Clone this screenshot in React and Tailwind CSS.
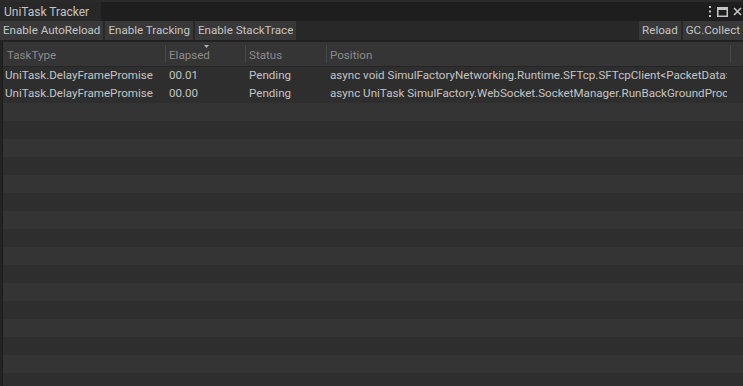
import React from 'react';

const rows = [
  {
    type: 'UniTask.DelayFramePromise',
    elapsed: '00.01',
    status: 'Pending',
    position: 'async void SimulFactoryNetworking.Runtime.SFTcp.SFTcpClient<PacketData>.ReceiveLoop()',
  },
  {
    type: 'UniTask.DelayFramePromise',
    elapsed: '00.00',
    status: 'Pending',
    position: 'async UniTask SimulFactory.WebSocket.SocketManager.RunBackGroundProcess()',
  },
];

const ToolButton = ({ children }) => (
  <div className="h-full flex items-center px-[3px] bg-[#383838] text-[#c4c4c4] whitespace-nowrap">
    {children}
  </div>
);

const App = () => {
  const filler = Array.from({ length: 18 });
  return (
    <div
      className="w-[743px] h-[386px] overflow-hidden bg-[#2e2e2e] flex flex-col text-[11.6px] leading-none"
      style={{ fontFamily: 'Roboto, "Noto Sans", sans-serif' }}
    >
      {/* window tab strip */}
      <div className="h-[21px] shrink-0 flex bg-[#1e1e1e] border-t-2 border-[#2a2a2a]">
        <div className="w-[101px] bg-[#282828] flex items-center pl-[4px] text-[#c4c4c4] whitespace-nowrap text-[12px]">UniTask Tracker</div>
        <div className="flex-1" />
        <div className="flex items-center gap-[5px] pr-[1px] text-[#c4c4c4]">
          <svg width="4" height="11" viewBox="0 0 4 11" className="fill-[#c4c4c4]">
            <rect x="1" y="0" width="2" height="2" />
            <rect x="1" y="4.5" width="2" height="2" />
            <rect x="1" y="9" width="2" height="2" />
          </svg>
          <svg width="11" height="10" viewBox="0 0 11 10" className="stroke-[#c4c4c4]" fill="none">
            <rect x="0.75" y="0.75" width="9.5" height="8.5" strokeWidth="1.5" />
            <line x1="0.75" y1="2" x2="10.25" y2="2" strokeWidth="2" />
          </svg>
          <svg width="9" height="9" viewBox="0 0 9 9" className="stroke-[#c4c4c4]">
            <path d="M1 1L8 8M8 1L1 8" strokeWidth="1.6" />
          </svg>
        </div>
      </div>

      {/* toolbar */}
      <div className="h-[20px] shrink-0 flex gap-[2px] bg-[#282828] border-b border-[#1f1f1f]">
        <ToolButton>Enable AutoReload</ToolButton>
        <ToolButton>Enable Tracking</ToolButton>
        <ToolButton>Enable StackTrace</ToolButton>
        <div className="flex-1" />
        <ToolButton>Reload</ToolButton>
        <ToolButton>GC.Collect</ToolButton>
      </div>

      {/* table */}
      <div className="flex-1 flex min-h-0">
        <div className="w-[3px] bg-[#232323] border-r border-[#1c1c1c] shrink-0" />
        <div className="flex-1 flex flex-col min-w-0 border-t border-[#232323]">
          {/* header */}
          <div className="h-[25px] shrink-0 flex bg-[#353535] border-b border-[#262626] text-[#8c8c8c]">
            <div className="w-[162px] flex items-center pl-[4px] pt-[3px]">TaskType</div>
            <div className="w-[1px] my-[3px] bg-[#474747]" />
            <div className="w-[79px] relative flex items-center pl-[3px] pt-[3px]">
              Elapsed
              <svg width="5" height="3" viewBox="0 0 5 3" className="absolute left-[38px] top-[3px] fill-[#b0b0b0]">
                <path d="M0 0H5L2.5 3Z" />
              </svg>
            </div>
            <div className="w-[1px] my-[3px] bg-[#474747]" />
            <div className="w-[80px] flex items-center pl-[3px] pt-[3px]">Status</div>
            <div className="w-[1px] my-[3px] bg-[#474747]" />
            <div className="w-[403px] flex items-center pl-[3px] pt-[3px]">Position</div>
            <div className="w-[1px] my-[3px] bg-[#474747]" />
            <div className="flex-1" />
          </div>

          {/* rows */}
          <div className="flex-1 flex flex-col overflow-hidden">
            {rows.map((r, i) => (
              <div key={i} className="h-[18px] shrink-0 flex items-center text-[#c4c4c4] bg-[#2e2e2e] whitespace-nowrap">
                <div className="w-[163px] pl-[2px] overflow-hidden">{r.type}</div>
                <div className="w-[80px] pl-[3px]">{r.elapsed}</div>
                <div className="w-[81px] pl-[3px]">{r.status}</div>
                <div className="w-[400px] pl-[3px] overflow-hidden">{r.position}</div>
              </div>
            ))}
            {filler.map((_, i) => (
              <div
                key={i}
                className={`h-[18px] shrink-0 ${i % 2 === 0 ? 'bg-[#343434]' : 'bg-[#2e2e2e]'}`}
              />
            ))}
          </div>
        </div>
      </div>
    </div>
  );
};

export default App;
